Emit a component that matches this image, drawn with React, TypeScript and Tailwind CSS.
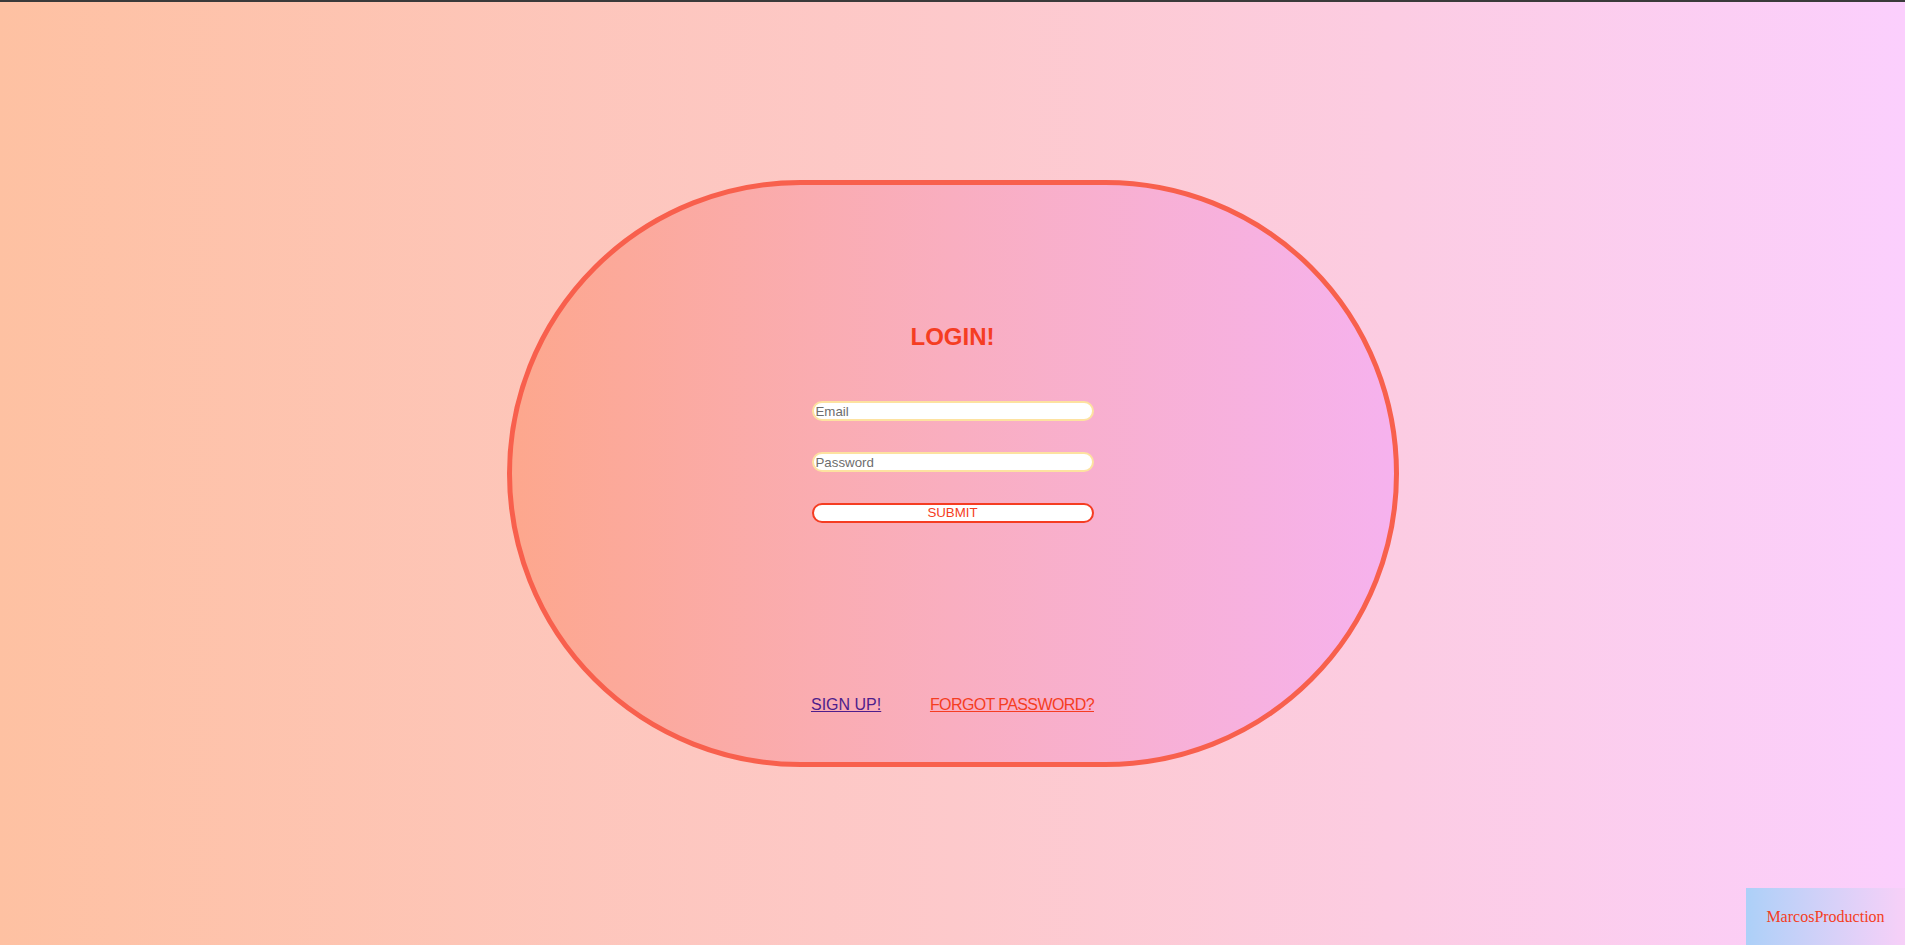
export default function App() {
  return (
    <div className="relative h-screen w-full overflow-hidden border-t-2 border-[#3a3a3a] bg-linear-to-r from-[#fec1a2] via-[#fdc9cb] to-[#fbcffd] font-['Liberation_Sans',Arial,sans-serif]">
      <div className="flex h-full items-center justify-center">
        <div className="flex h-[587px] w-[892px] flex-col items-center rounded-full border-[5px] border-[#f8604d] bg-linear-to-r from-[#fda78d] via-[#f9aec0] to-[#f6b2ee] pt-[138px]">
          <h1 className="text-[24px] leading-[28px] font-bold text-[#f53d22]">LOGIN!</h1>

          <form className="mt-[50px] flex w-[282px] flex-col gap-[31px]" onSubmit={(e) => e.preventDefault()}>
            <input
              type="email"
              placeholder="Email"
              className="h-[20px] w-full rounded-full border-2 border-[#fde2a0] bg-white px-[2px] text-[13.3px] text-[#333] outline-none placeholder:text-[#6d6d6d]"
            />
            <input
              type="password"
              placeholder="Password"
              className="h-[20px] w-full rounded-full border-2 border-[#fde2a0] bg-white px-[2px] text-[13.3px] text-[#333] outline-none placeholder:text-[#6d6d6d]"
            />
            <button
              type="submit"
              className="h-[20px] w-full rounded-full border-2 border-[#f53d22] bg-white text-[13.3px] leading-none text-[#f53d22]"
            >
              SUBMIT
            </button>
          </form>

          <div className="mt-[173px] flex w-[283px] items-center justify-between text-[16px] leading-[18px]">
            <a href="#" className="text-[#4e1e8c] underline">SIGN UP!</a>
            <a href="#" className="tracking-[-0.6px] text-[#f53d22] underline">FORGOT PASSWORD?</a>
          </div>
        </div>
      </div>

      {/* footer badge */}
      <div className="absolute right-0 bottom-0 flex h-[57px] w-[159px] items-center justify-center bg-linear-to-r from-[#acd0f8] to-[#f7d0f8] font-['Liberation_Serif','Times_New_Roman',serif] text-[16px] text-[#f53d22]">
        MarcosProduction
      </div>
    </div>
  );
}
